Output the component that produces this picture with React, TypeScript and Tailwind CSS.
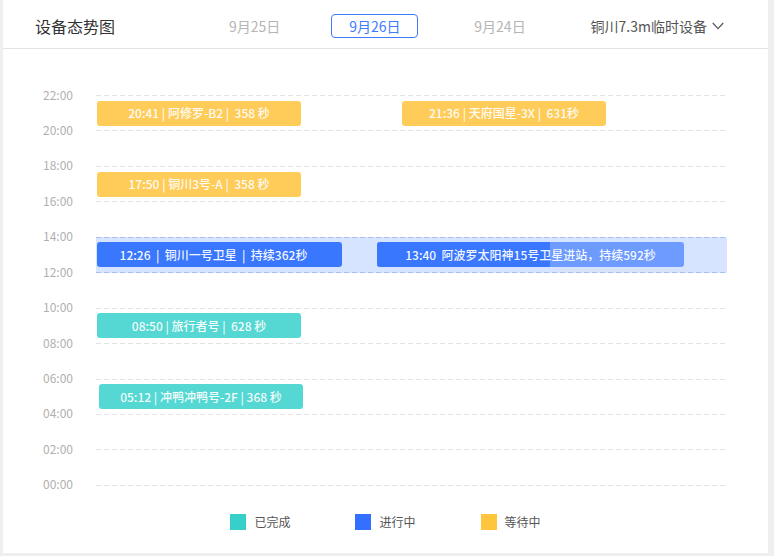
import React from 'react'

type Bar = { text: string; color: string; w: string; ml: string; pad?: string; progress?: boolean }

const hours = ['22:00', '20:00', '18:00', '16:00', '14:00', '12:00', '10:00', '08:00', '06:00', '04:00', '02:00', '00:00']

// bands between two hour lines, index = upper line index
const bands: Record<number, Bar[]> = {
  0: [
    { text: '20:41 | 阿修罗-B2 |  358 秒', color: 'bg-[#ffcc5a]', w: 'w-[204px]', ml: 'ml-[1px]' },
    { text: '21:36 | 天府国星-3X |  631秒', color: 'bg-[#ffcc5a]', w: 'w-[204px]', ml: 'ml-[101px]' }
  ],
  2: [{ text: '17:50 | 铜川3号-A |  358 秒', color: 'bg-[#ffcc5a]', w: 'w-[204px]', ml: 'ml-[1px]' }],
  4: [
    { text: '12:26  |  铜川一号卫星  |  持续362秒', color: 'bg-[#3a77ff]', w: 'w-[245px]', ml: 'ml-[1px]', pad: 'pr-[12px]' },
    { text: '13:40  阿波罗太阳神15号卫星进站，持续592秒', color: 'bg-[#6d9bff]', w: 'w-[307px]', ml: 'ml-[35px]', progress: true }
  ],
  6: [{ text: '08:50 | 旅行者号 |  628 秒', color: 'bg-[#55d8d3]', w: 'w-[204px]', ml: 'ml-[1px]' }],
  8: [{ text: '05:12 | 冲鸭冲鸭号-2F | 368 秒', color: 'bg-[#55d8d3]', w: 'w-[204px]', ml: 'ml-[3px]' }]
}

const legend = [
  { label: '已完成', color: 'bg-[#36cfc9]' },
  { label: '进行中', color: 'bg-[#3370ff]' },
  { label: '等待中', color: 'bg-[#ffc53d]' }
]

function DateTab({ label, active, className }: { label: string; active?: boolean; className?: string }) {
  if (active) {
    return (
      <div className={`h-[24px] w-[87px] rounded-[4px] border border-[#3d7bff] flex items-center justify-center text-[14px] text-[#3d7bff] ${className ?? ''}`}>
        {label}
      </div>
    )
  }
  return <div className={`text-[14px] text-[#b5b5b5] ${className ?? ''}`}>{label}</div>
}

export default function App() {
  return (
    <div className="w-[774px] h-[556px] bg-[#efefef] font-['Noto_Sans_CJK_SC','Noto_Sans',sans-serif]">
      <div className="ml-[3px] w-[765px] h-[553px] bg-white flex flex-col">
        {/* 顶部 */}
        <div className="h-[49px] border-b border-[#e3e3e3] flex items-center pt-[4px] pl-[32px] pr-[44px]">
          <div className="text-[16px] text-[#333]">设备态势图</div>
          <DateTab label="9月25日" className="ml-[114px]" />
          <DateTab label="9月26日" active className="ml-[51px]" />
          <DateTab label="9月24日" className="ml-[56px]" />
          <div className="ml-auto flex items-center text-[14px] text-[#555]">
            铜川7.3m临时设备
            <svg className="ml-[5px]" width="12" height="8" viewBox="0 0 12 8" fill="none">
              <polyline points="0.8,1 6,6.6 11.2,1" stroke="#555" strokeWidth="1.2" />
            </svg>
          </div>
        </div>

        {/* 图表 */}
        <div className="pt-[46px] pr-[41px] flex flex-col">
          {hours.map((h, i) => {
            const blue = i === 4 || i === 5
            return (
              <React.Fragment key={h}>
                <div className="h-px flex items-center">
                  <div className="w-[93px] pr-[23px] -mt-[2px] text-right text-[12px] leading-none text-[#b0b0b0]">{h}</div>
                  <div
                    className={`flex-1 h-px bg-[length:8px_1px] ${
                      blue
                        ? 'bg-[linear-gradient(to_right,#a8bff0_5px,#d6e4ff_5px)]'
                        : 'bg-[linear-gradient(to_right,#e2e2e2_5px,transparent_5px)]'
                    }`}
                  />
                </div>
                {i < hours.length - 1 && (
                  <div className={`h-[34.45px] ml-[93px] flex items-center ${i === 4 ? 'bg-[#d6e4ff]' : ''}`}>
                    {(bands[i] ?? []).map((b) => (
                      <div
                        key={b.text}
                        className={`relative h-[25px] ${b.w} ${b.ml} ${b.pad ?? ''} ${b.color} rounded-[3px] overflow-hidden flex items-center justify-center`}
                      >
                        {b.progress && <div className="absolute left-0 top-0 bottom-0 w-[173px] bg-[#3a77ff]" />}
                        <span className="relative whitespace-pre text-[12px] font-medium text-white/95">{b.text}</span>
                      </div>
                    ))}
                  </div>
                )}
              </React.Fragment>
            )
          })}
        </div>

        {/* 图例 */}
        <div className="mt-[27px] flex justify-center gap-[65px]">
          {legend.map((l) => (
            <div key={l.label} className="flex items-center">
              <div className={`w-[16px] h-[16px] ${l.color}`} />
              <span className="ml-[8px] text-[12px] text-[#555]">{l.label}</span>
            </div>
          ))}
        </div>
      </div>
    </div>
  )
}
